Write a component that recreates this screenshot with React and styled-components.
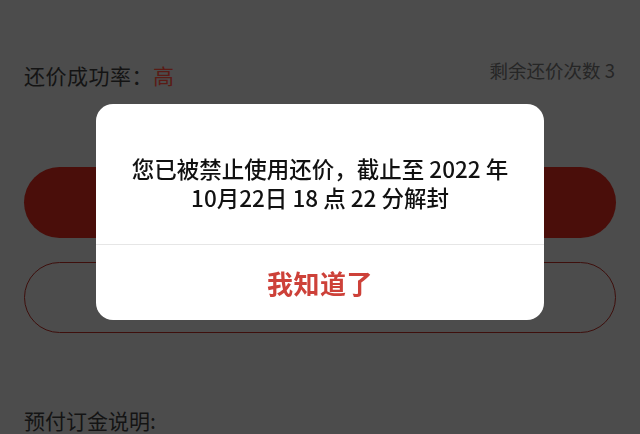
import styled, { createGlobalStyle } from "styled-components";

const GlobalStyle = createGlobalStyle`
  html, body {
    margin: 0;
    padding: 0;
    background-color: #4c4c4c;
    overflow: hidden;
  }
  body {
    font-family: "Noto Sans CJK SC", "Noto Sans", sans-serif;
  }
`;

const Page = styled.div`
  width: 640px;
  height: 434px;
  box-sizing: border-box;
  padding: 63px 24px 0 24px;
  background-color: #4c4c4c;
  display: flex;
  flex-direction: column;
`;

const InfoRow = styled.div`
  display: flex;
  justify-content: space-between;
  align-items: flex-start;
`;

const Label = styled.div`
  font-size: 21px;
  line-height: 24px;
  color: #141414;
  letter-spacing: 0.5px;

  span {
    color: #5a1b15;
  }
`;

const Remain = styled.div`
  font-size: 18.5px;
  line-height: 20px;
  margin-top: -3px;
  margin-right: 1px;
  color: #262626;
`;
// 还价 버튼

const PillButton = styled.div`
  height: 71px;
  border-radius: 36px;
  box-sizing: border-box;
  background-color: ${(p) => (p.$outline ? "transparent" : "#4a0e0a")};
  border: ${(p) => (p.$outline ? "1.5px solid #3e0f0c" : "none")};
  margin-top: ${(p) => p.$top}px;
`;

const Note = styled.div`
  margin-top: 75px;
  font-size: 21px;
  line-height: 24px;
  color: #141414;
`;

const Overlay = styled.div`
  position: fixed;
  inset: 0;
  display: flex;
  justify-content: center;
  align-items: center;
  padding-bottom: 10px;
`;

const Dialog = styled.div`
  width: 448px;
  background-color: #ffffff;
  border-radius: 17px;
  overflow: hidden;
  display: flex;
  flex-direction: column;
`;

const Message = styled.div`
  padding: 50px 16px 32px;
  text-align: center;
  font-size: 22.5px;
  font-weight: 500;
  line-height: 29px;
  color: #111111;
  border-bottom: 1px solid #e6e6e6;
`;

const Confirm = styled.div`
  height: 75px;
  display: flex;
  justify-content: center;
  align-items: center;
  font-size: 26px;
  font-weight: 700;
  color: #cd4139;
  letter-spacing: 0.5px;
`;

function App() {
  return (
    <>
      <GlobalStyle />
      <Page>
        <InfoRow>
          <Label>
            还价成功率：<span>高</span>
          </Label>
          <Remain>剩余还价次数 3</Remain>
        </InfoRow>
        <PillButton $top={80} />
        <PillButton $outline $top={24} />
        <Note>预付订金说明:</Note>
      </Page>
      <Overlay>
        <Dialog>
          <Message>
            您已被禁止使用还价，截止至 2022 年
            <br />
            10月22日 18 点 22 分解封
          </Message>
          <Confirm>我知道了</Confirm>
        </Dialog>
      </Overlay>
    </>
  );
}

export default App;
